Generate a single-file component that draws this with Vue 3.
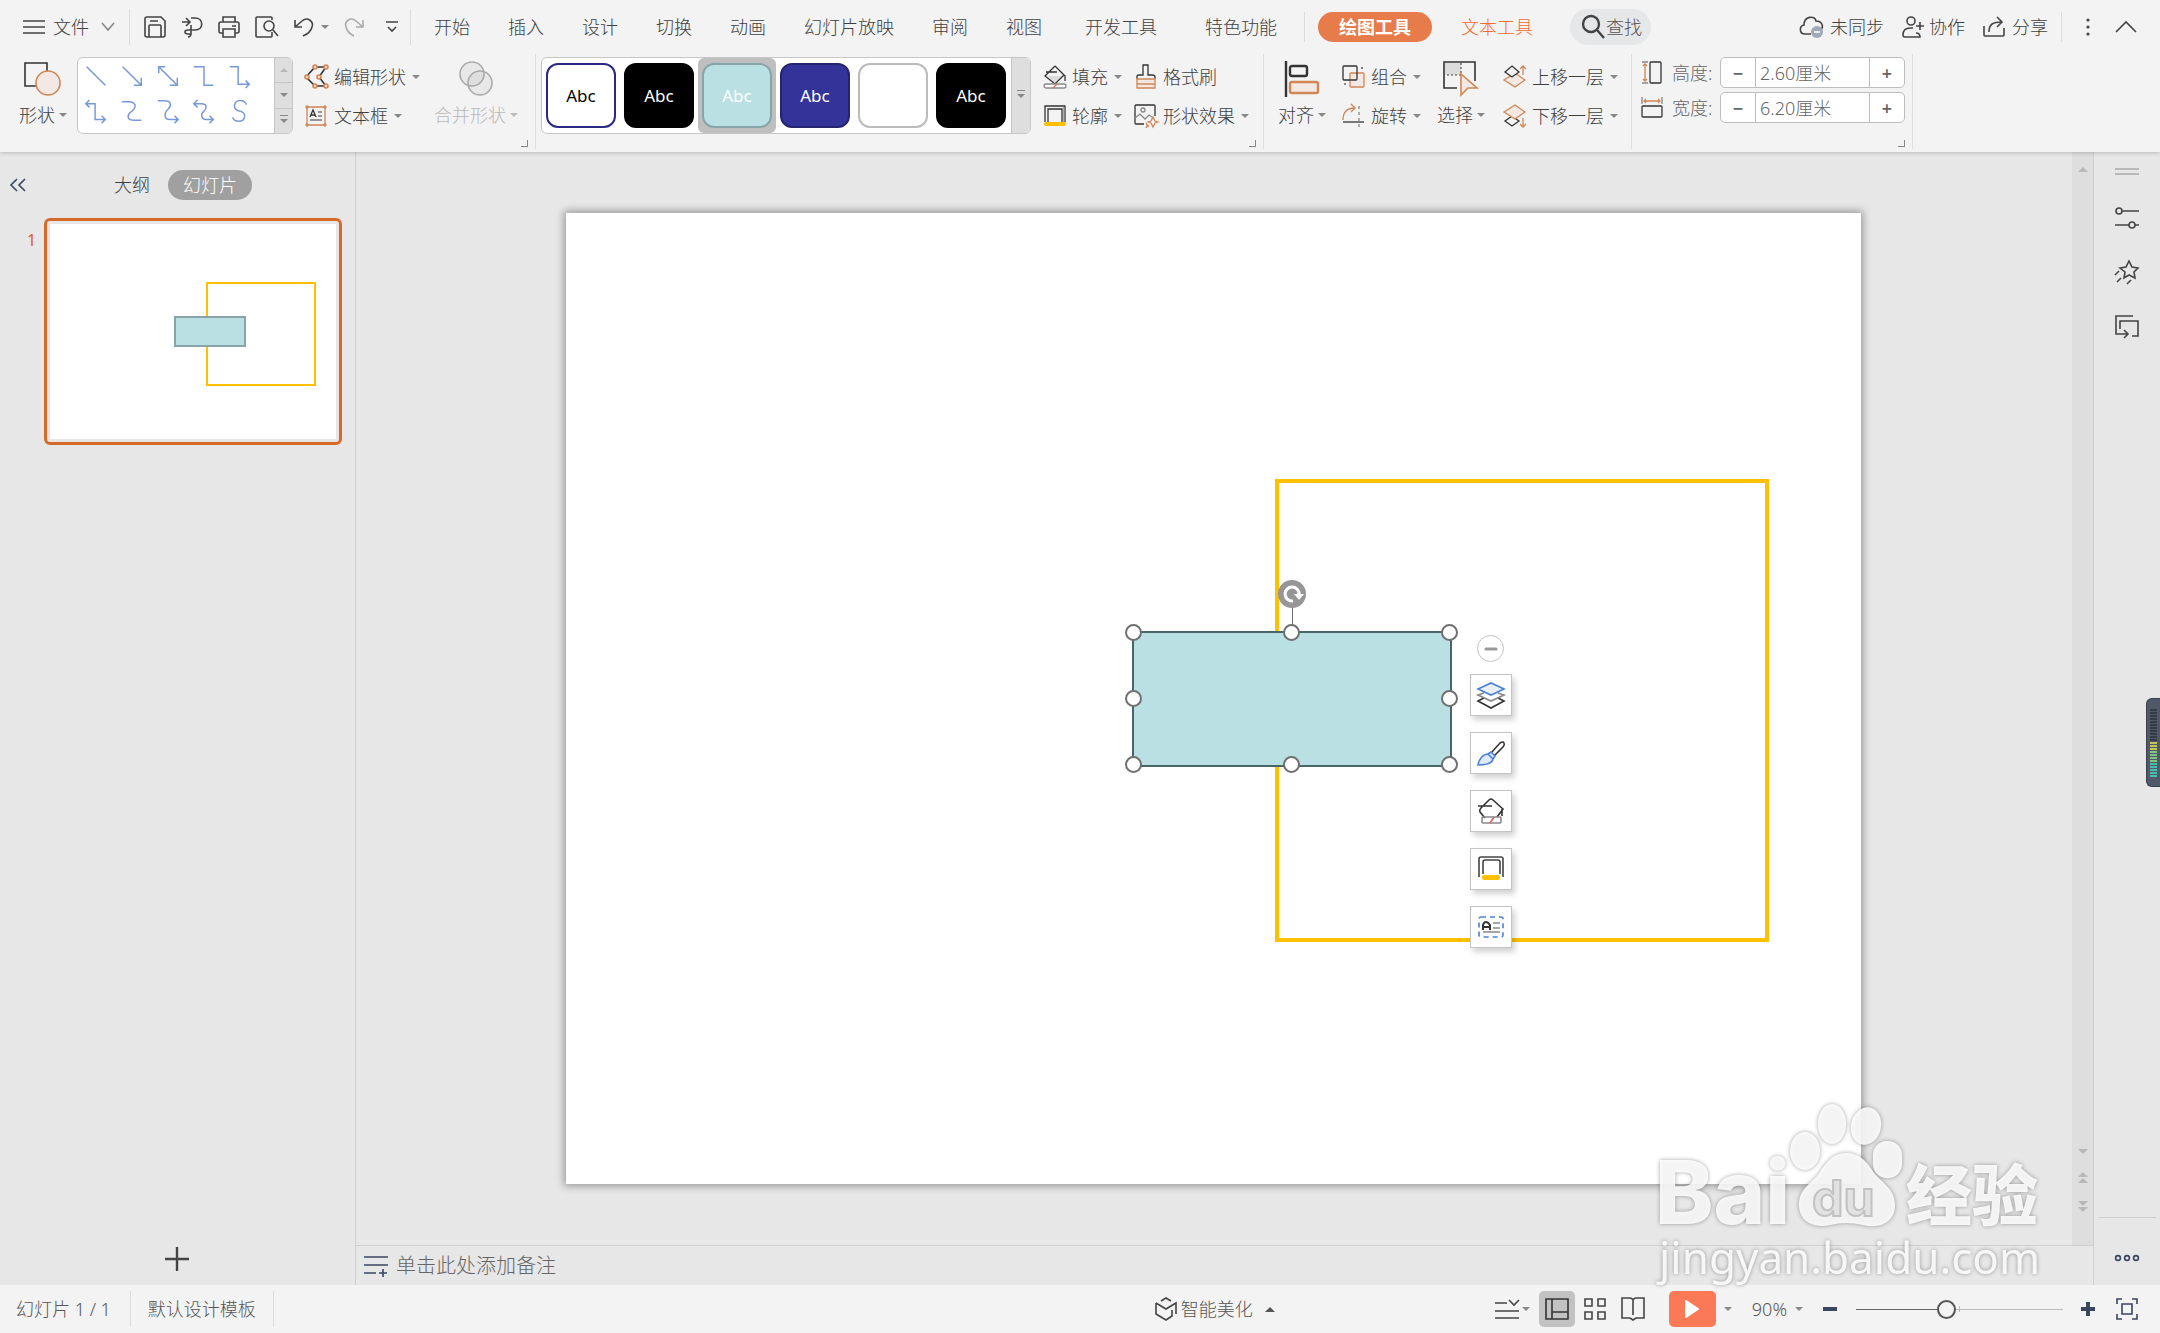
<script setup>
import { ref } from 'vue'

const tabs = ['开始', '插入', '设计', '切换', '动画', '幻灯片放映', '审阅', '视图']
const wideTabs = ['开发工具', '特色功能']

const connectors = [
  'M2 2 22 22',
  'M2 2 22 22M22 14V22H14',
  'M2 2 22 22M22 14V22H14M2 9V2H9',
  'M1 2H12V22H22',
  'M1 2H10V21H22M18 17 22 21 18 25',
  'M1 3H11V20H22M18 16 22 20 18 24M5 -1 1 3 5 7',
  'M1 1H8C17 1 17 7 12 11C6 15 6 21 15 21H22',
  'M1 0H8C16 0 16 5 12 9C7 14 8 20 14 20H23M19 16 23 20 19 24',
  'M1 3H9C16 3 15 8 12 11C8 14 9 20 14 20H22M18 16 22 20 18 24M5 -1 1 3 5 7',
  'M19 4C16 -2 6 -2 6 6C6 13 18 9 17 17C16 24 6 23 4 18'
]

const styles = [
  { name: 'outline', text: 'Abc' },
  { name: 'black', text: 'Abc' },
  { name: 'aqua', text: 'Abc' },
  { name: 'navy', text: 'Abc' },
  { name: 'plain', text: '' },
  { name: 'black', text: 'Abc' }
]

const handles = ['nw', 'n', 'ne', 'e', 'se', 's', 'sw', 'w']
const height = ref('2.60厘米')
const width = ref('6.20厘米')
const zoom = ref(43)
</script>

<template>
  <div class="app">
    <header class="top">
      <nav class="menubar">
        <button class="file">
          <svg class="ic" width="22" height="16"><path d="M0 2H22M0 8H22M0 14H22" /></svg>
          <span>文件</span>
          <svg class="ic soft" width="14" height="10"><path d="M1 1 7 8 13 1" /></svg>
        </button>
        <i class="rule tall"></i>
        <div class="quick">
          <button aria-label="保存"><svg class="ic" width="22" height="22"><path d="M1 3Q1 1 3 1H17L21 5V19Q21 21 19 21H3Q1 21 1 19ZM5 21V10Q5 9 6 9H16Q17 9 17 10V21M6 5H14" /></svg></button>
          <button aria-label="导出"><svg class="ic" width="22" height="22"><path d="M1 6H9M5 2 9 6 5 10M10 2H14C23 2 23 14 14 14H7C3 14 3 18 7 18H10V9M10 17C10 20 9 21 7 21" /></svg></button>
          <button aria-label="打印"><svg class="ic" width="22" height="22"><path d="M5 6V1H17V6M5 17H2Q1 17 1 15V8Q1 6 3 6H19Q21 6 21 8V15Q21 17 19 17H17M5 13H17V21H5ZM14 10H18" /></svg></button>
          <button aria-label="打印预览"><svg class="ic" width="24" height="22"><path d="M17 4V2Q17 1 16 1H2Q1 1 1 2V20Q1 21 2 21H16Q17 21 17 20V16M18 14 23 20" /><circle cx="14" cy="10" r="5" /></svg></button>
          <button aria-label="撤销"><svg class="ic" width="20" height="22"><path d="M1 4V11H8M1 11 8 5C14 0 20 6 18 11C17 15 14 18 9 20" /></svg></button>
          <i class="caret undo-caret"></i>
          <button aria-label="重做" class="redo"><svg class="ic faint" width="20" height="22"><path d="M19 4V11H12M19 11 12 5C6 0 0 6 2 11C3 15 6 18 10 20" /></svg></button>
          <button aria-label="更多" class="more"><svg class="ic" width="12" height="14"><path d="M0 2H12M2 7 6 11 10 7" /></svg></button>
        </div>
        <i class="rule tall tabs-start"></i>
        <button v-for="t in tabs" :key="t" class="tab">{{ t }}</button>
        <button v-for="t in wideTabs" :key="t" class="tab wide">{{ t }}</button>
        <i class="rule"></i>
        <button class="tab pill">绘图工具</button>
        <button class="tab orange">文本工具</button>
        <label class="search">
          <svg class="ic bold" width="24" height="26"><circle cx="9" cy="10" r="8" /><path d="M15 16 22 24" /></svg>
          <input type="text" placeholder="查找" aria-label="查找" />
        </label>
        <div class="account">
          <button><svg class="ic" width="26" height="24"><path d="M12 19H6C0 19 0 11 5 10C5 1 16 0 17 6C23 6 25 11 22 15" /><circle class="badge" cx="18" cy="17" r="6" /><path class="white" d="M15 17H21" /></svg><span>未同步</span></button>
          <button><svg class="ic" width="22" height="22"><circle cx="9" cy="5" r="4" /><path d="M16 21H3Q1 21 1 19C1 14 4 12 8 12H11M18 6V14M14 10H22M14 17Q18 17 18 21H14" /></svg><span>协作</span></button>
          <button><svg class="ic" width="24" height="22"><path d="M1 10V19Q1 20 2 20H20Q21 20 21 19V12M6 16C6 8 10 6 19 6M14 1 19 6 14 11" /></svg><span>分享</span></button>
        </div>
        <i class="rule"></i>
        <button class="dots" aria-label="菜单"><svg width="4" height="20"><g fill="#444"><circle cx="2" cy="3" r="1.6" /><circle cx="2" cy="10" r="1.6" /><circle cx="2" cy="17" r="1.6" /></g></svg></button>
        <button aria-label="收起功能区"><svg class="ic" width="22" height="12"><path d="M1 11 11 1 21 11" /></svg></button>
      </nav>

      <div class="ribbon">
        <section class="group g-shape">
          <button class="big">
            <span class="big-icon"><svg class="ic" width="38" height="34"><path stroke="#333" d="M1 1H23V24H1Z" /><circle cx="24" cy="21" r="12" fill="#f3e8e3" stroke="#d08656" /></svg></span>
            <span class="lbl">形状<i class="caret"></i></span>
          </button>
          <div class="gallery">
            <div class="lines">
              <button v-for="(d, i) in connectors" :key="i" :aria-label="'线条 ' + (i + 1)">
                <svg class="ic blue" width="24" height="26" viewBox="0 -2 24 28"><path :d="d" /></svg>
              </button>
            </div>
            <div class="scroller">
              <button aria-label="上一行"><i class="caret up pale"></i></button>
              <button aria-label="下一行"><i class="caret"></i></button>
              <button aria-label="展开"><i class="caret bar"></i></button>
            </div>
          </div>
          <div class="rows">
            <button class="cmd"><svg class="ic" width="24" height="24"><path stroke="#333" d="M10 2H21L14 12 21 21H10L1 12Z" /><g class="node"><circle cx="10" cy="2" r="2" /><circle cx="21" cy="2" r="2" /><circle cx="14" cy="12" r="2" /><circle cx="21" cy="21" r="2" /><circle cx="10" cy="21" r="2" /><circle cx="2" cy="12" r="2" /></g></svg>编辑形状<i class="caret"></i></button>
            <button class="cmd"><svg class="ic thin" width="24" height="22"><path stroke="#d08656" d="M2 2H20V20H2Z" /><path stroke="#333" d="M5 12 8 5 11 12M6 10H10" /><path stroke="#777" d="M13 7H17M13 11H17M5 15H17" /><g class="node"><circle cx="2" cy="2" r="1" /><circle cx="20" cy="2" r="1" /><circle cx="2" cy="20" r="1" /><circle cx="20" cy="20" r="1" /></g></svg>文本框<i class="caret"></i></button>
          </div>
          <button class="big off">
            <span class="big-icon"><svg class="ic faint" width="34" height="36"><g fill="#999" fill-opacity=".12"><circle cx="13" cy="13" r="12" /><circle cx="21" cy="22" r="12" /></g></svg></span>
            <span class="lbl">合并形状<i class="caret"></i></span>
          </button>
          <i class="corner"></i>
        </section>

        <section class="group g-style">
          <div class="gallery swatches">
            <span v-for="(s, i) in styles" :key="i" :class="['cell', { picked: i === 2 }]">
              <button :class="['swatch', s.name]" :aria-label="'样式 ' + (i + 1)">{{ s.text }}</button>
            </span>
            <button class="expand" aria-label="展开样式"><i class="caret bar"></i></button>
          </div>
          <div class="rows fill">
            <button class="cmd"><svg class="ic thin" width="24" height="24"><path fill="#dcdcdc" stroke="none" d="M4 11H20L12 19Z" /><path stroke="#333" d="M12 1 21 10 12 19 2 11 12 1M3 7H14M22 10V16" /><rect x="1" y="19" width="22" height="4" rx="2" fill="#fff" stroke="#888" /><path stroke="#e06666" d="M10 23 14 19" /></svg>填充<i class="caret"></i></button>
            <button class="cmd"><svg class="ic thin" width="24" height="22"><path stroke="#333" d="M2 17V1H22V17M5 17V4H19V17" /><path stroke="#888" d="M21 2V17" /><rect x="1" y="17" width="22" height="4" rx="2" fill="#ffc000" stroke="none" /></svg>轮廓<i class="caret"></i></button>
          </div>
          <div class="rows effect">
            <button class="cmd"><svg class="ic thin" width="24" height="26"><rect x="3" y="15" width="18" height="9" fill="#f3e8e3" stroke="none" /><path stroke="#333" d="M3 15V12Q3 11 5 11H9V1H14V11H18Q21 11 21 13V15" /><path stroke="#d08656" d="M3 15H21V24H3ZM3 20H21" /></svg>格式刷</button>
            <button class="cmd"><svg class="ic thin" width="24" height="24"><path stroke="#333" d="M10 20H2Q1 20 1 19V2Q1 1 2 1H20Q21 1 21 2V12" /><path stroke="#888" d="M1 14 6 10 11 15 15 11 18 13" /><circle cx="9" cy="6" r="2" stroke="#888" /><path stroke="#d08656" d="M19 13 21 17 24 18 21 19 19 23 17 19 14 18 17 17ZM12 19 13 21 15 22 13 22 12 24" /></svg>形状效果<i class="caret"></i></button>
          </div>
          <i class="corner"></i>
        </section>

        <section class="group g-arrange">
          <button class="big">
            <span class="big-icon"><svg class="ic bold" width="36" height="36"><path stroke="#333" d="M2 0V36" /><rect x="6" y="5" width="17" height="10" rx="2" stroke="#333" /><rect x="6" y="21" width="28" height="11" rx="2" fill="#f3e8e3" stroke="#d08656" /></svg></span>
            <span class="lbl">对齐<i class="caret"></i></span>
          </button>
          <div class="rows">
            <button class="cmd"><svg class="ic thin" width="24" height="24"><rect x="8" y="8" width="14" height="14" rx="1" fill="#f3e8e3" stroke="#d08656" /><rect x="1" y="1" width="14" height="14" rx="1" stroke="#333" /><path stroke="#555" d="M19 3H21M3 18V20" /></svg>组合<i class="caret"></i></button>
            <button class="cmd"><svg class="ic thin" width="24" height="24"><path stroke="#d08656" d="M1 16C1 8 5 4 13 4M9 0 13 4 9 8" /><path stroke="#333" d="M1 18H22" /><path stroke="#888" stroke-dasharray="3 3" d="M17 2V24" /></svg>旋转<i class="caret"></i></button>
          </div>
          <button class="big">
            <span class="big-icon"><svg class="ic" width="36" height="36"><path fill="#dcdcdc" stroke="none" d="M2 2H18V14H2Z" /><path stroke="#333" d="M14 27H1V1H32V20" /><path stroke="#777" stroke-dasharray="2 2" d="M18 2V14H2" /><path fill="#f3e8e3" stroke="#d08656" d="M18 13V34L25 27H34Z" /></svg></span>
            <span class="lbl">选择<i class="caret"></i></span>
          </button>
          <div class="rows">
            <button class="cmd"><svg class="ic thin" width="24" height="24"><path fill="#f3e8e3" stroke="#d08656" d="M1 15 12 8 22 15 12 22Z" /><path fill="#f3f3f3" stroke="#333" d="M2 7 9 1 16 7 9 12Z" /><path stroke="#d08656" d="M20 10V1M17 4 20 1 23 4" /></svg>上移一层<i class="caret"></i></button>
            <button class="cmd"><svg class="ic thin" width="24" height="24"><path fill="#f3f3f3" stroke="#333" d="M2 17 9 12 16 17 9 22Z" /><path fill="#f3e8e3" stroke="#d08656" d="M1 8 12 1 22 8 12 15Z" /><path stroke="#d08656" d="M20 14V23M17 20 20 23 23 20" /></svg>下移一层<i class="caret"></i></button>
          </div>
        </section>

        <section class="group g-size">
          <div class="size-row">
            <svg class="ic thin" width="22" height="24"><path stroke="#888" d="M1 1H7M1 22H7" /><path stroke="#d08656" d="M4 3V20M2 5 4 3 6 5M2 18 4 20 6 18" /><rect x="9" y="1" width="11" height="21" rx="1" stroke="#333" /></svg>
            <label for="h">高度:</label>
            <div class="spin"><button aria-label="减小高度">−</button><input id="h" v-model="height" type="text" /><button aria-label="增大高度">+</button></div>
          </div>
          <div class="size-row">
            <svg class="ic thin" width="22" height="22"><path stroke="#888" d="M1 0V7M21 0V7" /><path stroke="#d08656" d="M3 4H19M5 2 3 4 5 6M17 2 19 4 17 6" /><rect x="1" y="9" width="20" height="11" rx="1" stroke="#333" /></svg>
            <label for="w">宽度:</label>
            <div class="spin"><button aria-label="减小宽度">−</button><input id="w" v-model="width" type="text" /><button aria-label="增大宽度">+</button></div>
          </div>
          <i class="corner"></i>
        </section>
      </div>
    </header>

    <main class="body">
      <aside class="side">
        <div class="side-head">
          <button aria-label="收起"><svg class="ic slate" width="16" height="14"><path d="M7 1 1 7 7 13M15 1 9 7 15 13" /></svg></button>
          <button class="outline-tab">大纲</button>
          <button class="slides-tab">幻灯片</button>
        </div>
        <div class="thumb-row">
          <span class="num">1</span>
          <button class="thumb" aria-label="幻灯片 1"><span class="page"><i class="t-yellow"></i><i class="t-blue"></i></span></button>
        </div>
        <button class="add" aria-label="新建幻灯片"><svg class="ic bold" width="24" height="24"><path d="M0 12H24M12 0V24" /></svg></button>
      </aside>

      <section class="work">
        <div class="stage">
          <div class="canvas">
            <div class="slide">
              <div class="yellow"></div>
              <div class="rect">
                <span class="stem"></span>
                <svg class="rotor" width="28" height="28"><circle cx="14" cy="14" r="14" fill="#969696" /><path fill="none" stroke="#fff" stroke-width="3" d="M15 21A7 7 0 1 1 21 15" /><path fill="#fff" d="M16 14H26L21 20Z" /></svg>
                <span v-for="h in handles" :key="h" :class="['handle', h]"></span>
              </div>
              <div class="floats">
                <button class="min" aria-label="收起工具"><svg width="14" height="4"><path stroke="#999" stroke-width="3" stroke-linecap="round" d="M2 2H12" /></svg></button>
                <button aria-label="叠放次序"><svg class="ic" width="28" height="28"><path stroke="#333" d="M7 17 1 20 14 27 27 20 21 17" /><path stroke="#888" d="M7 12 1 14 14 20 27 14 21 12" /><path fill="#eaf1fb" stroke="#4a80d8" d="M1 8 14 2 27 8 14 14Z" /></svg></button>
                <button aria-label="样式"><svg class="ic" width="28" height="28"><path stroke="#333" d="M14 14 23 4Q26 2 27 4 28 6 26 8L17 17" /><path fill="#dfeaf9" stroke="#4a80d8" d="M1 26C2 20 6 15 11 15L16 20C15 25 9 26 1 26ZM11 15 14 13 18 17 16 20" /></svg></button>
                <button aria-label="填充"><svg class="ic" width="28" height="28"><path stroke="#333" d="M8 21 3 15Q2 13 4 11L12 3Q14 1 16 3L26 12 20 20M1 9H15M25 12V19" /><rect x="5" y="20" width="19" height="6" rx="1" stroke="#888" /><path stroke="#e06666" d="M13 26 17 20" /></svg></button>
                <button aria-label="轮廓"><svg class="ic" width="28" height="28"><path stroke="#444" d="M2 22V4Q2 2 4 2H24Q26 2 26 4V22M6 19V7Q6 5 8 5H21Q23 5 23 7V19" /><rect x="5" y="20" width="18" height="5" rx="2" fill="#ffc000" stroke="none" /></svg></button>
                <button aria-label="文本"><svg class="ic" width="28" height="28"><rect x="2" y="4" width="24" height="20" rx="2" stroke="#4a80d8" stroke-dasharray="5 4" /><path stroke="#333" stroke-width="2" d="M6 17V12Q7 9 9 9T13 12V17M6 14H13" /><path stroke="#888" d="M16 10H23M16 15H23M6 19H23" /></svg></button>
              </div>
            </div>
          </div>
          <div class="vbar">
            <i class="caret up pale"></i>
            <div class="vbar-end">
              <i class="caret pale"></i>
              <span><i class="caret up pale"></i><i class="caret up pale"></i></span>
              <span><i class="caret pale"></i><i class="caret pale"></i></span>
            </div>
          </div>
        </div>
        <div class="notes">
          <svg class="ic slate" width="24" height="20"><path d="M0 1H24M0 9H24M0 17H12M15 17H23M19 13V21" /></svg>
          <span>单击此处添加备注</span>
        </div>
      </section>

      <aside class="rail">
        <svg class="ic faint" width="24" height="8"><path d="M0 1H24M0 6H24" /></svg>
        <button aria-label="属性"><svg class="ic" width="24" height="22"><circle cx="4" cy="4" r="3" /><circle cx="17" cy="18" r="3" /><path d="M7 4H24M0 18H14M20 18H24" /></svg></button>
        <button aria-label="动画"><svg class="ic" width="24" height="24"><path d="M14 1 17 7 23 8 19 12 20 18 14 15 9 18 10 12 5 8 11 7ZM4 11 0 15M6 18 2 22M16 20 12 24" /></svg></button>
        <button aria-label="切换窗格"><svg class="ic" width="24" height="24"><path d="M18 1H1V19H13M9 15 13 19 9 23M5 14V6H23V21H17" /></svg></button>
        <button class="rail-more" aria-label="更多"><svg class="ic slate" width="26" height="8"><circle cx="4" cy="4" r="2.4" /><circle cx="13" cy="4" r="2.4" /><circle cx="22" cy="4" r="2.4" /></svg></button>
        <div class="meter"><i v-for="n in 23" :key="n" :class="{ lime: n > 11, green: n > 14, teal: n > 18 }"></i></div>
      </aside>
    </main>

    <footer class="status">
      <span class="count">幻灯片 1 / 1</span>
      <i class="rule tall"></i>
      <span class="template">默认设计模板</span>
      <i class="rule tall"></i>
      <button class="smart"><svg class="ic" width="22" height="24"><path d="M6 4 11 1 16 4M1 6 11 12 21 6V17M1 6V17L11 23 17 19V13" /></svg>智能美化<i class="caret up dark"></i></button>
      <div class="views">
        <button class="list"><svg class="ic" width="24" height="20"><path d="M0 4H12M0 12H24M0 19H24M14 1 19 6 24 1" /></svg><i class="caret"></i></button>
        <button class="view on" aria-label="普通视图"><svg class="ic" width="24" height="22"><path stroke="#333" d="M1 1H23V21H1ZM7 1V21M7 14H23" /></svg></button>
        <button class="view" aria-label="浏览视图"><svg class="ic" width="22" height="22"><path d="M1 1H8V8H1ZM14 1H21V8H14ZM1 14H8V21H1ZM14 14H21V21H14Z" /></svg></button>
        <button class="view" aria-label="阅读视图"><svg class="ic" width="24" height="24"><path d="M12 3Q11 1 9 1H1V21H9L12 23 15 21H23V1H15Q13 1 12 3V18" /></svg></button>
      </div>
      <button class="play" aria-label="播放"><svg width="14" height="18"><path fill="#fff" stroke="#fff" stroke-width="2" stroke-linejoin="round" d="M1 1 13 9 1 17Z" /></svg></button>
      <i class="caret play-caret"></i>
      <button class="pct">90%<i class="caret"></i></button>
      <button aria-label="缩小"><svg class="ic slate heavy" width="16" height="16"><path d="M1 8H15" /></svg></button>
      <input v-model="zoom" class="zoom" type="range" min="0" max="100" aria-label="显示比例" />
      <button aria-label="放大"><svg class="ic slate heavy" width="16" height="16"><path d="M1 8H15M8 1V15" /></svg></button>
      <button class="fit" aria-label="适应窗口"><svg class="ic slate" width="22" height="22"><path d="M1 6V1H6M16 1H21V6M21 16V21H16M6 21H1V16M6 6H16V16H6Z" /></svg></button>
    </footer>

    <svg class="mark" width="400" height="200" aria-label="Baidu经验">
      <g class="mark-fill">
        <text class="bai" x="5" y="134">Bai</text>
        <ellipse cx="155" cy="61" rx="15" ry="19" />
        <ellipse cx="182" cy="34" rx="14" ry="20" />
        <ellipse cx="216" cy="36" rx="15" ry="19" transform="rotate(12 216 36)" />
        <rect x="223" y="51" width="29" height="37" rx="14" />
        <path d="M196 63C208 63 216 70 222 80C230 92 245 98 245 115C245 133 229 139 213 135Q196 131 180 135C162 139 148 130 149 113C150 97 164 92 170 82C177 71 184 63 196 63Z" />
        <text class="jy" x="256" y="130">经验</text>
        <text class="url" x="9" y="184">jingyan.baidu.com</text>
      </g>
      <text class="du" x="162" y="126">du</text>
    </svg>
  </div>
</template>

<style>
body {
  margin: 0;
}
</style>

<style scoped>
.app {
  position: relative;
  display: flex;
  flex-direction: column;
  min-height: 100vh;
  overflow: hidden;
  background: #e7e7e7;
  color: #404040;
  font: 300 18px/24px "Noto Sans", "Noto Sans CJK SC", sans-serif;
  white-space: nowrap;
}
button,
input {
  margin: 0;
  padding: 0;
  border: 0;
  background: none;
  color: inherit;
  font: inherit;
  outline: none;
}
button {
  display: inline-flex;
  align-items: center;
  flex: none;
}
svg {
  flex: none;
  display: block;
  overflow: visible;
}
.ic {
  fill: none;
  stroke: #444;
  stroke-width: 1.6;
}
.ic.thin { stroke-width: 1.3; }
.ic.soft { stroke: #888; }
.ic.faint { stroke: #aaa; }
.ic.blue { stroke: #7799d8; }
.ic.slate { stroke: #3a4560; }
.ic.bold { stroke-width: 2.4; }
.ic.heavy { stroke-width: 4; }
.badge { fill: #a0a9b8; stroke: none; }
.white { stroke: #fff; }
.node { fill: #f6d9c8; stroke: #d08656; }
.caret {
  flex: none;
  display: block;
  width: 0;
  height: 0;
  border: 4px solid transparent;
  border-top-color: #888;
  border-bottom-width: 0;
}
.caret.up {
  border-width: 0 4px 4px;
  border-color: transparent transparent #888;
}
.caret.pale { border-top-color: #b8b8b8; border-bottom-color: #b8b8b8; }
.caret.dark {
  border-width: 0 5px 5px;
  border-bottom-color: #555;
}
.caret.bar { position: relative; }
.caret.bar::before {
  content: "";
  position: absolute;
  left: -4px;
  top: -8px;
  width: 8px;
  height: 1px;
  background: #888;
}
.rule {
  flex: none;
  width: 1px;
  height: 30px;
  background: #dcdcdc;
}
.rule.tall { height: 36px; }

.top {
  position: relative;
  z-index: 2;
  background: #f3f3f3;
  box-shadow: 0 1px 4px rgba(0, 0, 0, 0.2);
}
.menubar {
  display: flex;
  align-items: center;
  height: 53px;
  padding: 0 23px;
}
.file { gap: 8px; margin-right: 14px; }
.file svg:last-child { margin-left: 4px; }
.quick {
  display: flex;
  align-items: center;
  gap: 15px;
  width: 266px;
  margin: 0 0 0 14px;
}
.undo-caret { margin-left: -8px; }
.more { margin-left: 7px; }
.tabs-start { margin-right: 4px; }
.tab {
  height: 30px;
  padding: 0 19px;
}
.tab.wide { padding: 0 24px; }
.tab.wide + .rule { margin-left: 3px; }
.tab.pill {
  margin: 0 10px 0 13px;
  padding: 0 21px;
  border-radius: 15px;
  background: #e77b4a;
  color: #fff;
  font-weight: 700;
}
.tab.orange { color: #f36c30; }
.search {
  display: flex;
  align-items: center;
  height: 36px;
  width: 81px;
  margin-left: 18px;
  border-radius: 18px;
  background: #e6e7e8;
}
.search svg { margin-left: 12px; }
.search input { width: 40px; }
.search input::placeholder { color: #555; opacity: 1; }
.account {
  display: flex;
  gap: 18px;
  margin: 0 13px 0 auto;
}
.account button { gap: 5px; }
.dots { margin: 0 25px 0 24px; }

.ribbon {
  display: flex;
  height: 99px;
}
.group {
  position: relative;
  flex: none;
  display: flex;
  align-items: flex-start;
  height: 92px;
  margin-top: 1px;
  padding-top: 3px;
  border-right: 1px solid #dfdfdf;
}
.corner {
  position: absolute;
  right: 7px;
  bottom: 2px;
  width: 6px;
  height: 6px;
  border: solid #888;
  border-width: 0 1px 1px 0;
}
.big {
  flex-direction: column;
}
.big-icon {
  display: flex;
  align-items: center;
  height: 44px;
}
.lbl {
  display: flex;
  align-items: center;
  gap: 4px;
  line-height: 28px;
}
.off { color: #b8b8b8; }
.off .caret { border-top-color: #bbb; }
.rows {
  display: flex;
  flex-direction: column;
  align-items: flex-start;
}
.cmd {
  height: 39px;
}
.cmd svg { margin-right: 5px; }
.cmd .caret { margin-left: 6px; }
.gallery {
  display: flex;
  box-sizing: border-box;
  height: 77px;
  border: 1px solid #c6c6c6;
  border-radius: 6px;
  background: #fff;
  overflow: hidden;
}
.g-shape { padding-left: 19px; }
.g-shape .gallery { width: 216px; margin-left: 10px; }
.g-shape .rows { margin: 0 14px 0 12px; }
.g-shape .off { margin-right: 17px; }
.lines {
  flex: 1;
  display: grid;
  grid-template-columns: repeat(5, 36px);
  grid-template-rows: 36px 36px;
  padding-left: 6px;
}
.scroller {
  display: flex;
  flex-direction: column;
  width: 18px;
  background: #dedede;
}
.scroller button {
  flex: 1;
  justify-content: center;
  border-left: 1px solid #c6c6c6;
}
.scroller button + button { border-top: 1px solid #c6c6c6; }
.g-style { padding-left: 5px; }
.swatches { width: 490px; }
.cell {
  flex: none;
  display: flex;
  justify-content: center;
  align-items: center;
  width: 78px;
  height: 75px;
  border-radius: 6px;
}
.cell.picked { background: #bfbfbf; }
.swatch {
  box-sizing: border-box;
  width: 70px;
  height: 65px;
  justify-content: center;
  border: 2px solid #000;
  border-radius: 12px;
  color: #fff;
  font-size: 17px;
  font-weight: 400;
}
.swatch.outline { border-color: #2a2a85; color: #000; }
.swatch.black { background: #000; }
.swatch.aqua { background: #bae0e3; border-color: #87a5a8; }
.swatch.navy { background: #333399; border-color: #25256f; }
.swatch.plain { border-color: #bbb; }
.expand {
  width: 19px;
  margin-left: auto;
  justify-content: center;
  border-left: 1px solid #c6c6c6;
  background: #dedede;
}
.fill { margin-left: 12px; }
.effect { margin: 0 14px 0 12px; }
.g-arrange { padding: 3px 13px 0 14px; }
.g-arrange .rows { margin-left: 16px; }
.g-arrange .rows + .big { margin-left: 16px; }
.g-arrange .big + .rows:last-child { margin-left: 18px; }
.g-size {
  flex-direction: column;
  gap: 4px;
  padding-left: 9px;
  padding-right: 7px;
}
.size-row {
  display: flex;
  align-items: center;
  height: 31px;
}
.size-row label { width: 48px; margin-left: 9px; color: #666; }
.spin {
  display: flex;
  box-sizing: border-box;
  width: 185px;
  height: 31px;
  border: 1px solid #bdbdbd;
  border-radius: 5px;
  background: #fff;
  color: #666;
}
.spin button { width: 34px; justify-content: center; font-weight: 600; }
.spin input {
  flex: 1;
  min-width: 0;
  padding-left: 4px;
  border: solid #bdbdbd;
  border-width: 0 1px;
}

.body {
  flex: 1;
  display: flex;
}
.side {
  flex: none;
  display: flex;
  flex-direction: column;
  width: 355px;
  border-right: 1px solid #d0d0d0;
}
.side-head {
  display: flex;
  align-items: center;
  height: 30px;
  margin: 18px 0 18px 10px;
}
.outline-tab { margin: 0 18px 0 88px; }
.slides-tab {
  height: 30px;
  padding: 0 15px;
  border-radius: 15px;
  background: #a0a0a0;
  color: #fff;
}
.thumb-row {
  display: flex;
  align-items: flex-start;
}
.num {
  width: 17px;
  margin: 10px 0 0 27px;
  color: #d9611e;
  font-size: 16px;
  font-weight: 400;
}
.thumb {
  padding: 3px;
  border: 3px solid #d66a2b;
  border-radius: 6px;
}
.page {
  position: relative;
  width: 286px;
  height: 215px;
  background: #fff;
}
.t-yellow,
.t-blue {
  position: absolute;
  box-sizing: border-box;
  border: 2px solid #ffc000;
}
.t-yellow { left: 156px; top: 58px; width: 110px; height: 104px; }
.t-blue { left: 124px; top: 92px; width: 72px; height: 31px; border-color: #87a5a8; background: #bae0e3; }
.add { margin: auto auto 14px 165px; }

.work {
  flex: 1;
  display: flex;
  flex-direction: column;
  min-width: 0;
}
.stage {
  flex: 1;
  display: flex;
}
.canvas {
  flex: 1;
  padding: 61px 211px 60px 210px;
}
.slide {
  position: relative;
  aspect-ratio: 1295 / 971;
  background: #fff;
  box-shadow: 0 0 8px 2px rgba(0, 0, 0, 0.35);
}
.yellow {
  position: absolute;
  left: 709px;
  top: 266px;
  width: 486px;
  height: 455px;
  border: 4px solid #ffc000;
}
.rect {
  position: absolute;
  left: 566px;
  top: 418px;
  width: 316px;
  height: 132px;
  border: 2px solid #4a6567;
  background: #bae0e3;
}
.handle {
  position: absolute;
  box-sizing: border-box;
  width: 17px;
  height: 17px;
  margin: -9px 0 0 -9px;
  border: 2px solid #707070;
  border-radius: 50%;
  background: #fff;
}
.handle.nw, .handle.w, .handle.sw { left: 0; }
.handle.n, .handle.s { left: 50%; }
.handle.ne, .handle.e, .handle.se { left: 100%; }
.handle.nw, .handle.n, .handle.ne { top: 0; }
.handle.w, .handle.e { top: 50%; }
.handle.sw, .handle.s, .handle.se { top: 100%; }
.stem {
  position: absolute;
  left: 50%;
  bottom: 100%;
  width: 1px;
  height: 30px;
  background: #707070;
}
.rotor { position: absolute; left: 144px; top: -53px; }
.floats {
  position: absolute;
  left: 904px;
  top: 422px;
  display: flex;
  flex-direction: column;
  align-items: flex-start;
  gap: 16px;
}
.floats button {
  box-sizing: border-box;
  width: 42px;
  height: 42px;
  justify-content: center;
  border: 1px solid #c4c4c4;
  background: #fff;
  box-shadow: 3px 4px 6px rgba(0, 0, 0, 0.18);
}
.floats .min {
  width: 27px;
  height: 27px;
  margin: 0 0 -4px 7px;
  border-radius: 50%;
  box-shadow: none;
}
.vbar {
  display: flex;
  flex-direction: column;
  justify-content: space-between;
  align-items: center;
  width: 21px;
  padding: 15px 0 33px;
  box-sizing: border-box;
  background: #dedede;
}
.vbar .caret { border-width: 5px 5px 0; }
.vbar .caret.up { border-width: 0 5px 5px; }
.vbar-end {
  display: flex;
  flex-direction: column;
  gap: 18px;
}
.vbar-end span { display: flex; flex-direction: column; gap: 1px; }
.notes {
  display: flex;
  align-items: center;
  gap: 8px;
  height: 39px;
  padding-left: 8px;
  border-top: 1px solid #d0d0d0;
  color: #666;
  font-size: 20px;
}
.rail {
  position: relative;
  flex: none;
  display: flex;
  flex-direction: column;
  align-items: center;
  gap: 31px;
  width: 66px;
  padding-top: 16px;
  box-sizing: content-box;
  border-left: 1px solid #d0d0d0;
}
.rail-more {
  justify-content: center;
  width: 58px;
  height: 68px;
  margin-top: auto;
  border-top: 1px solid #d0d0d0;
  padding-top: 12px;
  box-sizing: border-box;
}
.meter {
  position: absolute;
  right: 0;
  top: 546px;
  display: flex;
  flex-direction: column;
  align-items: center;
  gap: 1px;
  box-sizing: border-box;
  width: 14px;
  height: 89px;
  padding-top: 10px;
  border: 1px solid #3a404c;
  border-right: 0;
  border-radius: 6px 0 0 6px;
  background: #515867;
}
.meter i { width: 7px; height: 2px; background: #343a47; }
.meter .lime { background: #bfc65a; }
.meter .green { background: #7fc481; }
.meter .teal { background: #48bfae; }

.status {
  display: flex;
  align-items: center;
  height: 48px;
  background: #f3f3f3;
  color: #555;
}
.count { margin: 0 19px 0 16px; }
.template { margin: 0 17px 0 17px; }
.smart { gap: 4px; margin: 0 220px 0 auto; }
.smart .caret { margin-left: 8px; }
.views {
  display: flex;
  align-items: center;
  gap: 2px;
  margin-right: 18px;
}
.list { gap: 3px; margin-right: 7px; }
.view {
  width: 36px;
  height: 36px;
  justify-content: center;
  border-radius: 5px;
}
.view.on { background: #c2c2c2; }
.play {
  width: 47px;
  height: 36px;
  justify-content: center;
  border-radius: 5px;
  background: #fb7957;
}
.play-caret { margin: 0 20px 0 8px; }
.pct { gap: 8px; margin-right: 19px; }
.zoom {
  appearance: none;
  width: 207px;
  height: 20px;
  margin: 0 17px 0 18px;
  background:
    linear-gradient(#666, #666) 0 50% / 43% 1px no-repeat,
    linear-gradient(#bbb, #bbb) 103px 50% / 1px 6px no-repeat,
    linear-gradient(#bbb, #bbb) 0 50% / 100% 1px no-repeat;
}
.zoom::-webkit-slider-thumb {
  appearance: none;
  box-sizing: border-box;
  width: 19px;
  height: 19px;
  border: 2px solid #555;
  border-radius: 50%;
  background: #f3f3f3;
}
.fit { margin: 0 22px 0 20px; }

.mark {
  position: absolute;
  z-index: 3;
  right: 110px;
  bottom: 43px;
  pointer-events: none;
}
.mark-fill {
  fill: rgba(255, 255, 255, 0.88);
  filter: drop-shadow(0 0 2px rgba(0, 0, 0, 0.4));
}
.bai { font: 800 88px Inter, sans-serif; }
.jy { font: 900 66px "Noto Sans CJK SC", sans-serif; }
.url { font: 400 44px "Noto Sans", sans-serif; }
.du {
  font: 700 50px Inter, sans-serif;
  fill: #e2e2e2;
  stroke: #c2c2c2;
  stroke-width: 2px;
}
</style>
